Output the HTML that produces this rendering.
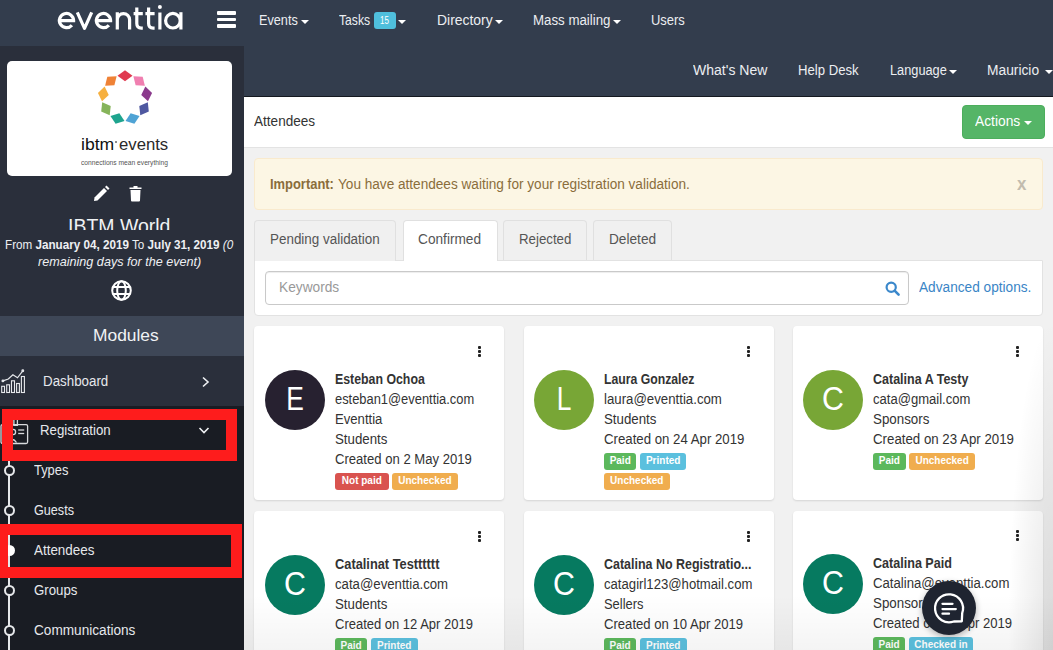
<!DOCTYPE html><html><head><meta charset="utf-8">
<style>
*{box-sizing:border-box;margin:0;padding:0}
html,body{width:1053px;height:650px;overflow:hidden;background:#f1f1f1;font-family:"Liberation Sans",sans-serif;position:relative}
.abs{position:absolute}
.t{position:absolute;white-space:nowrap;line-height:1;transform-origin:0 0}
#topbar{left:0;top:0;width:1053px;height:46px;background:#333d4d}
#bar2{left:244px;top:46px;width:809px;height:51px;background:#333d4d;border-bottom:1px solid #151920}
#side{left:0;top:46px;width:244px;height:604px;background:#2a2f3b}
#hdr{left:244px;top:97px;width:809px;height:51px;background:#fff;border-bottom:1px solid #e3e3e3}
.nav{color:#eceef1;font-size:14px}
.caret{position:absolute;width:0;height:0;border-left:4px solid transparent;border-right:4px solid transparent;border-top:4px solid #fff}
.sm{color:#e6e8ec;font-size:14px}
.card{position:absolute;width:250px;background:#fff;border-radius:4px;box-shadow:0 1px 2px rgba(0,0,0,.12)}
.av{position:absolute;width:60px;height:60px;border-radius:50%;color:#fff;font-size:33px;text-align:center;line-height:57px}
.ct{position:absolute;white-space:nowrap;line-height:20px;font-size:14px;color:#333;transform-origin:0 0}
.nm{font-weight:bold}
.avl{display:inline-block;transform:scaleX(.8);font-weight:normal}
.kb{position:absolute;width:3px;height:11px;background:radial-gradient(circle,#222 1.5px,transparent 1.6px) 0 0/3px 4px repeat-y}
.bd{position:absolute;height:17px;border-radius:3px;color:#fff;font-size:10px;font-weight:bold;line-height:16px;text-align:center}
.g{background:#5cb85c}.b{background:#5bc0de}.o{background:#f0ad4e}.r{background:#d9534f}
</style></head><body>
<div id="topbar" class="abs"></div>
<div id="side" class="abs"></div>
<div id="bar2" class="abs"></div>
<div id="hdr" class="abs"></div>

<!-- top bar -->
<svg class="abs" style="left:0;top:0" width="200" height="46" viewBox="0 0 200 46" fill="none" stroke="#fff" stroke-width="3.2">
<path d="M59.4 20.6 H73.6 A7.1 7.1 0 1 0 71.9 25.2"></path>
<path d="M77.3 12.3 L84.5 28.4 L91.7 12.3" stroke-linejoin="round"></path>
<path d="M96.4 20.6 H110.6 A7.1 7.1 0 1 0 108.9 25.2"></path>
<path d="M117.3 29.5 V12.2 M117.3 19.8 A6.15 6.15 0 0 1 129.6 19.8 V29.5"></path>
<path d="M136.8 7.4 V23.6 Q136.8 28.1 141.3 28.1 H142.8 M133.6 13.6 H142.8"></path>
<path d="M148.6 7.4 V23.6 Q148.6 28.1 153.1 28.1 H154.6 M145.4 13.6 H154.6"></path>
<path d="M159.9 12.5 V29.5"></path>
<circle cx="159.9" cy="7.1" r="2" fill="#fff" stroke="none"></circle>
<circle cx="172.9" cy="20.7" r="7.3"></circle>
<path d="M180.9 12.2 V29.5"></path>
</svg>
<div class="abs" style="left:217px;top:11px;width:19px;height:3.5px;background:#fff;border-radius:1px"></div>
<div class="abs" style="left:217px;top:17.5px;width:19px;height:3.5px;background:#fff;border-radius:1px"></div>
<div class="abs" style="left:217px;top:24px;width:19px;height:3.5px;background:#fff;border-radius:1px"></div>

<div class="t nav" style="left: 259px; top: 13px; transform: scaleX(0.9063); transform-origin: 0px 0px;">Events</div><div class="caret" style="left:301px;top:20px"></div>
<div class="t nav" style="left: 339px; top: 13px; transform: scaleX(0.8688); transform-origin: 0px 0px;">Tasks</div>
<div class="abs" style="left:374px;top:12px;width:22px;height:17px;background:#4fbfdc;border-radius:3px"></div><div class="t" style="left: 379.8px; top: 15.5px; font-size: 10px; color: rgb(255, 255, 255); transform: scaleX(0.8); transform-origin: 0px 0px;">15</div>
<div class="caret" style="left:398px;top:20px"></div>
<div class="t nav" style="left: 437px; top: 13px; transform: scaleX(0.9944); transform-origin: 0px 0px;">Directory</div><div class="caret" style="left:495px;top:20px"></div>
<div class="t nav" style="left: 533px; top: 13px; transform: scaleX(0.9486); transform-origin: 0px 0px;">Mass mailing</div><div class="caret" style="left:613px;top:20px"></div>
<div class="t nav" style="left: 651px; top: 13px; transform: scaleX(0.9244); transform-origin: 0px 0px;">Users</div>

<div class="t nav" style="left: 693px; top: 63px; transform: scaleX(1.002); transform-origin: 0px 0px;">What's New</div>
<div class="t nav" style="left: 798px; top: 63px; transform: scaleX(0.9382); transform-origin: 0px 0px;">Help Desk</div>
<div class="t nav" style="left: 890px; top: 63px; transform: scaleX(0.9118); transform-origin: 0px 0px;">Language</div><div class="caret" style="left:949px;top:70px"></div>
<div class="t nav" style="left: 987px; top: 63px; transform: scaleX(0.9848); transform-origin: 0px 0px;">Mauricio</div><div class="caret" style="left:1045px;top:70px"></div>

<!-- header -->
<div class="t" style="left: 254px; top: 114px; font-size: 14px; color: rgb(51, 51, 51); transform: scaleX(0.9689); transform-origin: 0px 0px;">Attendees</div>
<div class="abs" style="left:962px;top:105px;width:83px;height:34px;background:#55b567;border:1px solid #4cae5c;border-radius:4px"></div>
<div class="t" style="left: 975px; top: 114px; font-size: 14px; color: rgb(255, 255, 255); transform: scaleX(0.9843); transform-origin: 0px 0px;">Actions</div><div class="caret" style="left:1024px;top:121px"></div>

<!-- sidebar -->
<div class="abs" style="left:7px;top:61px;width:225px;height:115px;background:#fff;border-radius:5px"></div>
<svg class="abs" style="left:95px;top:67px" width="60" height="60" viewBox="95 67 60 60">
<g transform="translate(125 97.8)">
<polygon points="0,-27.5 7.5,-22 0,-16.5 -7.5,-22" fill="#e03a50"></polygon>
<polygon points="0,-27.5 7.5,-22 0,-16.5 -7.5,-22" fill="#f07fb0" transform="rotate(40)"></polygon>
<polygon points="0,-27.5 7.5,-22 0,-16.5 -7.5,-22" fill="#8b3a8c" transform="rotate(80)"></polygon>
<polygon points="0,-27.5 7.5,-22 0,-16.5 -7.5,-22" fill="#4f58a0" transform="rotate(120)"></polygon>
<polygon points="0,-27.5 7.5,-22 0,-16.5 -7.5,-22" fill="#4fa3d5" transform="rotate(160)"></polygon>
<polygon points="0,-27.5 7.5,-22 0,-16.5 -7.5,-22" fill="#1ea48e" transform="rotate(200)"></polygon>
<polygon points="0,-27.5 7.5,-22 0,-16.5 -7.5,-22" fill="#86b45a" transform="rotate(240)"></polygon>
<polygon points="0,-27.5 7.5,-22 0,-16.5 -7.5,-22" fill="#f6b040" transform="rotate(280)"></polygon>
<polygon points="0,-27.5 7.5,-22 0,-16.5 -7.5,-22" fill="#ef8236" transform="rotate(320)"></polygon>
</g></svg>
<div class="t" style="left: 81.2px; top: 137px; font-size: 16px; color: rgb(17, 17, 17); transform: scaleX(1.0981); transform-origin: 0px 0px;">ibtm</div><div class="abs" style="left:115.3px;top:140.5px;width:2.2px;height:2.2px;border-radius:50%;background:#666"></div><div class="t" style="left: 119.2px; top: 137px; font-size: 16px; color: rgb(42, 42, 42); transform: scaleX(1.0437); transform-origin: 0px 0px;">events</div>
<div class="t" style="left: 81px; top: 159px; font-size: 7.5px; color: rgb(85, 85, 85); transform: scaleX(0.8907); transform-origin: 0px 0px;">connections mean everything</div>

<!-- pencil -->
<svg class="abs" style="left:93px;top:185px" width="17" height="17" viewBox="0 0 17 17">
<path d="M1.5 12.5 L11 3 L14 6 L4.5 15.5 L1 16 Z" fill="#fff"></path>
<path d="M12 2 L13.5 0.5 L16.5 3.5 L15 5 Z" fill="#fff"></path>
</svg>
<!-- trash -->
<svg class="abs" style="left:129px;top:186px" width="13" height="16" viewBox="0 0 13 16">
<path d="M0.5 1.5 H12.5 V3 H0.5 Z M4.5 0 H8.5 V1.5 H4.5 Z" fill="#fff"></path>
<path d="M1.5 4 H11.5 L11 14.5 Q11 15.5 10 15.5 H3 Q2 15.5 2 14.5 Z" fill="#fff"></path>
</svg>

<div class="abs" style="left:0;top:205px;width:244px;height:25px;overflow:hidden">
<div class="t" style="left: 68px; top: 10.5px; font-size: 20px; color: rgb(240, 242, 244); transform: scaleX(0.9734); transform-origin: 0px 0px;">IBTM World</div>
</div>
<div class="t" style="left: 5px; top: 237.5px; font-size: 13px; color: rgb(238, 240, 243); transform: scaleX(0.8978); transform-origin: 0px 0px;">From <b>January 04, 2019</b> To <b>July 31, 2019</b> <i>(0</i></div>
<div class="t" style="left: 38px; top: 254.5px; font-size: 13px; color: rgb(238, 240, 243); transform: scaleX(0.9699); transform-origin: 0px 0px;"><i>remaining days for the event)</i></div>
<!-- globe -->
<svg class="abs" style="left:111px;top:280px" width="21" height="21" viewBox="0 0 21 21" fill="none" stroke="#fff" stroke-width="2">
<circle cx="10.5" cy="10.5" r="9.3"></circle>
<ellipse cx="10.5" cy="10.5" rx="4.3" ry="9.3"></ellipse>
<line x1="1.5" y1="7" x2="19.5" y2="7"></line>
<line x1="1.5" y1="14" x2="19.5" y2="14"></line>
</svg>

<div class="abs" style="left:0;top:316px;width:244px;height:40px;background:#3e4757"></div>
<div class="t" style="left: 93px; top: 327px; font-size: 17px; color: rgb(240, 242, 244); transform: scaleX(1.0223); transform-origin: 0px 0px;">Modules</div>

<!-- dashboard -->
<svg class="abs" style="left:0;top:368px" width="27" height="27" viewBox="0 368 27 27" fill="none" stroke="#e6e8ec" stroke-width="1.1">
<rect x="1.7" y="386.3" width="2.8" height="6.2"></rect>
<rect x="6.7" y="384.8" width="2.8" height="7.7"></rect>
<rect x="11.5" y="380.8" width="3" height="11.7"></rect>
<rect x="16.6" y="383.5" width="2.8" height="9"></rect>
<rect x="21.4" y="376.5" width="3" height="16"></rect>
<polyline points="2.9,380.9 8.3,379 12.9,374.8 17.5,377.8 22.8,370.8" stroke-width="1.2"></polyline>
<circle cx="2.9" cy="380.9" r="0.9" fill="#e6e8ec"></circle><circle cx="22.8" cy="370.8" r="0.9" fill="#e6e8ec"></circle>
</svg>
<div class="t sm" style="left: 43px; top: 373.5px; transform: scaleX(0.9533); transform-origin: 0px 0px;">Dashboard</div>
<svg class="abs" style="left:201px;top:376px" width="10" height="12" viewBox="0 0 10 12" fill="none" stroke="#eef0f3" stroke-width="1.6"><polyline points="2,1.5 7,6 2,10.5"></polyline></svg>

<!-- submenu dark area -->
<div class="abs" style="left:0;top:406px;width:244px;height:244px;background:#191c23"></div>
<!-- registration icon -->
<svg class="abs" style="left:0;top:414px" width="30" height="32" viewBox="0 414 30 32" fill="none" stroke="#d8dadd" stroke-width="1.3">
<rect x="1" y="424.6" width="26.6" height="18.9" rx="1.5"></rect>
<path d="M13.9 414 V425.4 H17.4 V414"></path>
<line x1="18.2" y1="430" x2="24.2" y2="430"></line><line x1="18.2" y1="433.5" x2="24.2" y2="433.5"></line>
<circle cx="13" cy="432" r="2.6"></circle>
<path d="M8.5 442.5 Q12.5 436.5 16.5 442.5"></path>
</svg>
<div class="t sm" style="left: 39.7px; top: 423.4px; transform: scaleX(0.9464); transform-origin: 0px 0px;">Registration</div>
<svg class="abs" style="left:198px;top:426px" width="12" height="9" viewBox="0 0 12 9" fill="none" stroke="#eef0f3" stroke-width="1.6"><polyline points="1.5,2 6,6.5 10.5,2"></polyline></svg>

<!-- timeline -->
<div class="abs" style="left:8px;top:460px;width:2px;height:190px;background:#e6e8ea"></div>
<div class="abs" style="left:3.5px;top:465px;width:11px;height:11px;border:2px solid #e6e8ea;border-radius:50%;background:#191c23"></div>
<div class="abs" style="left:3.5px;top:505px;width:11px;height:11px;border:2px solid #e6e8ea;border-radius:50%;background:#191c23"></div>
<div class="abs" style="left:3.5px;top:545px;width:11px;height:11px;border:2px solid #fff;border-radius:50%;background:#fff"></div>
<div class="abs" style="left:3.5px;top:585px;width:11px;height:11px;border:2px solid #e6e8ea;border-radius:50%;background:#191c23"></div>
<div class="abs" style="left:3.5px;top:625px;width:11px;height:11px;border:2px solid #e6e8ea;border-radius:50%;background:#191c23"></div>
<div class="t sm" style="left: 33.8px; top: 463.2px; transform: scaleX(0.9208); transform-origin: 0px 0px;">Types</div>
<div class="t sm" style="left: 33.8px; top: 503.2px; transform: scaleX(0.9017); transform-origin: 0px 0px;">Guests</div>
<div class="t sm" style="left: 33.8px; top: 543.2px; transform: scaleX(0.9578); transform-origin: 0px 0px;">Attendees</div>
<div class="t sm" style="left: 33.8px; top: 583.2px; transform: scaleX(0.9451); transform-origin: 0px 0px;">Groups</div>
<div class="t sm" style="left: 33.8px; top: 623.2px; transform: scaleX(0.9725); transform-origin: 0px 0px;">Communications</div>

<!-- red boxes -->
<div class="abs" style="left:2px;top:409px;width:235px;height:52px;border:11px solid #fe1c1c;border-left-width:11px"></div>
<div class="abs" style="left:0;top:523.5px;width:242px;height:54.5px;border:11px solid #fe1c1c;border-left-width:8px"></div>


<!-- alert -->
<div class="abs" style="left:254px;top:158px;width:789px;height:52px;background:#fcf6e4;border:1px solid #f9eacd;border-radius:4px"></div>
<div class="t" style="left: 270.3px; top: 176.5px; font-size: 14px; color: rgb(138, 109, 59); font-weight: bold; transform: scaleX(0.9232); transform-origin: 0px 0px;">Important:</div><div class="t" style="left: 337.8px; top: 176.5px; font-size: 14px; color: rgb(138, 109, 59); transform: scaleX(0.9714); transform-origin: 0px 0px;">You have attendees waiting for your registration validation.</div>
<div class="t" style="left: 1016.5px; top: 174.4px; font-size: 19px; font-weight: bold; color: rgb(194, 188, 174); transform: scaleX(0.8886); transform-origin: 0px 0px;">x</div>

<!-- tabs -->
<div class="abs" style="left:254px;top:260px;width:789px;height:56px;background:#fff;border:1px solid #e2e2e2;border-radius:0 0 4px 4px"></div>
<div class="abs" style="left:254px;top:220px;width:142px;height:41px;background:#f0f0f0;border:1px solid #e0e0e0;border-bottom:none;border-radius:4px 4px 0 0"></div>
<div class="abs" style="left:402.5px;top:220px;width:95px;height:41px;background:#fff;border:1px solid #e0e0e0;border-bottom:none;border-radius:4px 4px 0 0"></div>
<div class="abs" style="left:503px;top:220px;width:84px;height:40px;background:#f0f0f0;border:1px solid #e0e0e0;border-bottom:none;border-radius:4px 4px 0 0"></div>
<div class="abs" style="left:593px;top:220px;width:79px;height:40px;background:#f0f0f0;border:1px solid #e0e0e0;border-bottom:none;border-radius:4px 4px 0 0"></div>
<div class="t" style="left: 270.3px; top: 232.2px; font-size: 14px; color: rgb(85, 85, 85); transform: scaleX(0.9587); transform-origin: 0px 0px;">Pending validation</div>
<div class="t" style="left: 417.9px; top: 232.2px; font-size: 14px; color: rgb(85, 85, 85); transform: scaleX(0.9769); transform-origin: 0px 0px;">Confirmed</div>
<div class="t" style="left: 519px; top: 232.2px; font-size: 14px; color: rgb(85, 85, 85); transform: scaleX(0.9481); transform-origin: 0px 0px;">Rejected</div>
<div class="t" style="left: 608.8px; top: 232.2px; font-size: 14px; color: rgb(85, 85, 85); transform: scaleX(0.9758); transform-origin: 0px 0px;">Deleted</div>

<!-- search -->
<div class="abs" style="left:265px;top:271px;width:644px;height:34px;background:#fff;border:1px solid #c9c9c9;border-radius:4px;box-shadow:inset 0 1px 1px rgba(0,0,0,.075)"></div>
<div class="t" style="left: 278.5px; top: 280.2px; font-size: 14px; color: rgb(153, 153, 153); transform: scaleX(0.9794); transform-origin: 0px 0px;">Keywords</div>
<svg class="abs" style="left:884.5px;top:280.7px" width="16" height="16" viewBox="0 0 16 16" fill="none" stroke="#3b88cb" stroke-width="2.2"><circle cx="6.2" cy="6.2" r="4.6"></circle><line x1="9.6" y1="9.6" x2="13.6" y2="13.6" stroke-linecap="round" stroke-width="2.6"></line></svg>
<div class="t" style="left: 919.3px; top: 279.5px; font-size: 14px; color: rgb(58, 133, 198); transform: scaleX(0.9757); transform-origin: 0px 0px;">Advanced options.</div>
<div class="card" style="left:254px;top:326px;height:174px"></div>
<div class="abs" style="left:477.5px;top:346.0px;width:3.4px;height:3px;background:#222;border-radius:1px"></div><div class="abs" style="left:477.5px;top:350.0px;width:3.4px;height:3px;background:#222;border-radius:1px"></div><div class="abs" style="left:477.5px;top:354.0px;width:3.4px;height:3px;background:#222;border-radius:1px"></div>
<div class="av" style="left:265px;top:370px;background:#272130"><span class="avl">E</span></div>
<div class="ct nm" style="left: 335px; top: 369px; transform: scaleX(0.8811); transform-origin: 0px 0px;">Esteban Ochoa</div>
<div class="ct" style="left: 335px; top: 389px; transform: scaleX(0.9206); transform-origin: 0px 0px;">esteban1@eventtia.com</div>
<div class="ct" style="left: 335px; top: 409px; transform: scaleX(0.9369); transform-origin: 0px 0px;">Eventtia</div>
<div class="ct" style="left: 335px; top: 429px; transform: scaleX(0.9481); transform-origin: 0px 0px;">Students</div>
<div class="ct" style="left: 335px; top: 449px; transform: scaleX(0.9349); transform-origin: 0px 0px;">Created on 2 May 2019</div>
<div class="bd r" style="left:335px;top:473px;width:53.6px">Not paid</div>
<div class="bd o" style="left:392.1px;top:473px;width:65.6px">Unchecked</div>
<div class="card" style="left:523.5px;top:326px;height:174px"></div>
<div class="abs" style="left:746.5px;top:346px;width:3.4px;height:3px;background:#222;border-radius:1px"></div><div class="abs" style="left:746.5px;top:350px;width:3.4px;height:3px;background:#222;border-radius:1px"></div><div class="abs" style="left:746.5px;top:354px;width:3.4px;height:3px;background:#222;border-radius:1px"></div>
<div class="av" style="left:534px;top:370px;background:#78a636"><span class="avl">L</span></div>
<div class="ct nm" style="left: 604px; top: 369px; transform: scaleX(0.8737); transform-origin: 0px 0px;">Laura Gonzalez</div>
<div class="ct" style="left: 604px; top: 389px; transform: scaleX(0.9453); transform-origin: 0px 0px;">laura@eventtia.com</div>
<div class="ct" style="left: 604px; top: 409px; transform: scaleX(0.9481); transform-origin: 0px 0px;">Students</div>
<div class="ct" style="left: 604px; top: 429px; transform: scaleX(0.9444); transform-origin: 0px 0px;">Created on 24 Apr 2019</div>
<div class="bd g" style="left:604px;top:453px;width:32.4px">Paid</div>
<div class="bd b" style="left:639.9px;top:453px;width:46.6px">Printed</div>
<div class="bd o" style="left:604px;top:473px;width:65.6px">Unchecked</div>
<div class="card" style="left:792.7px;top:326px;height:174px"></div>
<div class="abs" style="left:1015.5px;top:346px;width:3.4px;height:3px;background:#222;border-radius:1px"></div><div class="abs" style="left:1015.5px;top:350px;width:3.4px;height:3px;background:#222;border-radius:1px"></div><div class="abs" style="left:1015.5px;top:354px;width:3.4px;height:3px;background:#222;border-radius:1px"></div>
<div class="av" style="left:803px;top:370px;background:#78a636"><span class="avl" style="transform:scaleX(.92)">C</span></div>
<div class="ct nm" style="left: 873px; top: 369px; transform: scaleX(0.8928); transform-origin: 0px 0px;">Catalina A Testy</div>
<div class="ct" style="left: 873px; top: 389px; transform: scaleX(0.9323); transform-origin: 0px 0px;">cata@gmail.com</div>
<div class="ct" style="left: 873px; top: 409px; transform: scaleX(0.9534); transform-origin: 0px 0px;">Sponsors</div>
<div class="ct" style="left: 873px; top: 429px; transform: scaleX(0.9477); transform-origin: 0px 0px;">Created on 23 Apr 2019</div>
<div class="bd g" style="left:873px;top:453px;width:32.7px">Paid</div>
<div class="bd o" style="left:909.2px;top:453px;width:65.8px">Unchecked</div>
<div class="card" style="left:254px;top:511px;height:174px"></div>
<div class="abs" style="left:477.5px;top:531.0px;width:3.4px;height:3px;background:#222;border-radius:1px"></div><div class="abs" style="left:477.5px;top:535.0px;width:3.4px;height:3px;background:#222;border-radius:1px"></div><div class="abs" style="left:477.5px;top:539.0px;width:3.4px;height:3px;background:#222;border-radius:1px"></div>
<div class="av" style="left:265px;top:555px;background:#067a60"><span class="avl" style="transform:scaleX(.92)">C</span></div>
<div class="ct nm" style="left: 335px; top: 554px; transform: scaleX(0.9152); transform-origin: 0px 0px;">Catalinat Testttttt</div>
<div class="ct" style="left: 335px; top: 574px; transform: scaleX(0.9421); transform-origin: 0px 0px;">cata@eventtia.com</div>
<div class="ct" style="left: 335px; top: 594px; transform: scaleX(0.9481); transform-origin: 0px 0px;">Students</div>
<div class="ct" style="left: 335px; top: 614px; transform: scaleX(0.9275); transform-origin: 0px 0px;">Created on 12 Apr 2019</div>
<div class="bd g" style="left:335px;top:638px;width:32.3px">Paid</div>
<div class="bd b" style="left:370.8px;top:638px;width:46.8px">Printed</div>
<div class="card" style="left:523.5px;top:511px;height:174px"></div>
<div class="abs" style="left:746.5px;top:531px;width:3.4px;height:3px;background:#222;border-radius:1px"></div><div class="abs" style="left:746.5px;top:535px;width:3.4px;height:3px;background:#222;border-radius:1px"></div><div class="abs" style="left:746.5px;top:539px;width:3.4px;height:3px;background:#222;border-radius:1px"></div>
<div class="av" style="left:534px;top:555px;background:#067a60"><span class="avl" style="transform:scaleX(.92)">C</span></div>
<div class="ct nm" style="left: 604px; top: 554px; transform: scaleX(0.8895); transform-origin: 0px 0px;">Catalina No Registratio...</div>
<div class="ct" style="left: 604px; top: 574px; transform: scaleX(0.9382); transform-origin: 0px 0px;">catagirl123@hotmail.com</div>
<div class="ct" style="left: 604px; top: 594px; transform: scaleX(0.9206); transform-origin: 0px 0px;">Sellers</div>
<div class="ct" style="left: 604px; top: 614px; transform: scaleX(0.9356); transform-origin: 0px 0px;">Created on 10 Apr 2019</div>
<div class="bd g" style="left:604px;top:638px;width:32.3px">Paid</div>
<div class="bd b" style="left:639.8px;top:638px;width:46.8px">Printed</div>
<div class="card" style="left:792.7px;top:511px;height:174px"></div>
<div class="abs" style="left:1015.5px;top:530px;width:3.4px;height:3px;background:#222;border-radius:1px"></div><div class="abs" style="left:1015.5px;top:534px;width:3.4px;height:3px;background:#222;border-radius:1px"></div><div class="abs" style="left:1015.5px;top:538px;width:3.4px;height:3px;background:#222;border-radius:1px"></div>
<div class="av" style="left:803px;top:554px;background:#067a60"><span class="avl" style="transform:scaleX(.92)">C</span></div>
<div class="ct nm" style="left: 873px; top: 553px; transform: scaleX(0.8974); transform-origin: 0px 0px;">Catalina Paid</div>
<div class="ct" style="left: 873px; top: 573px; transform: scaleX(0.941); transform-origin: 0px 0px;">Catalina@eventtia.com</div>
<div class="ct" style="left: 873px; top: 593px; transform: scaleX(0.9534); transform-origin: 0px 0px;">Sponsors</div>
<div class="ct" style="left: 873px; top: 613px; transform: scaleX(0.9356); transform-origin: 0px 0px;">Created on 10 Apr 2019</div>
<div class="bd g" style="left:873px;top:637px;width:32.3px">Paid</div>
<div class="bd b" style="left:908.8px;top:637px;width:64.5px">Checked in</div>

<!-- overlays -->
<div class="abs" style="left:244px;top:595px;width:809px;height:55px;background:linear-gradient(to bottom,rgba(0,0,0,0),rgba(0,0,0,.045))"></div>
<div class="abs" style="left:900px;top:300px;width:153px;height:350px;background:radial-gradient(45px 330px at 100% 100%,rgba(0,0,0,.1),rgba(0,0,0,0))"></div>
<!-- chat -->
<div class="abs" style="left:922px;top:581px;width:54px;height:54px;border-radius:50%;background:#1f2430;box-shadow:0 2px 6px rgba(0,0,0,.3)"></div>
<svg class="abs" style="left:922px;top:581px" width="54" height="54" viewBox="0 0 54 54" fill="none" stroke="#fff" stroke-width="2.3" stroke-linecap="round">
<path d="M40.2 32.1 A14 14 0 1 0 31.8 40.5 L39.8 40.3 Z" stroke-linejoin="round"></path>
<line x1="20.5" y1="22.8" x2="30.5" y2="22.8"></line>
<line x1="20.5" y1="28.1" x2="33.8" y2="28.1"></line>
<line x1="20.5" y1="32.7" x2="27" y2="32.7"></line>
</svg>


</body></html>
